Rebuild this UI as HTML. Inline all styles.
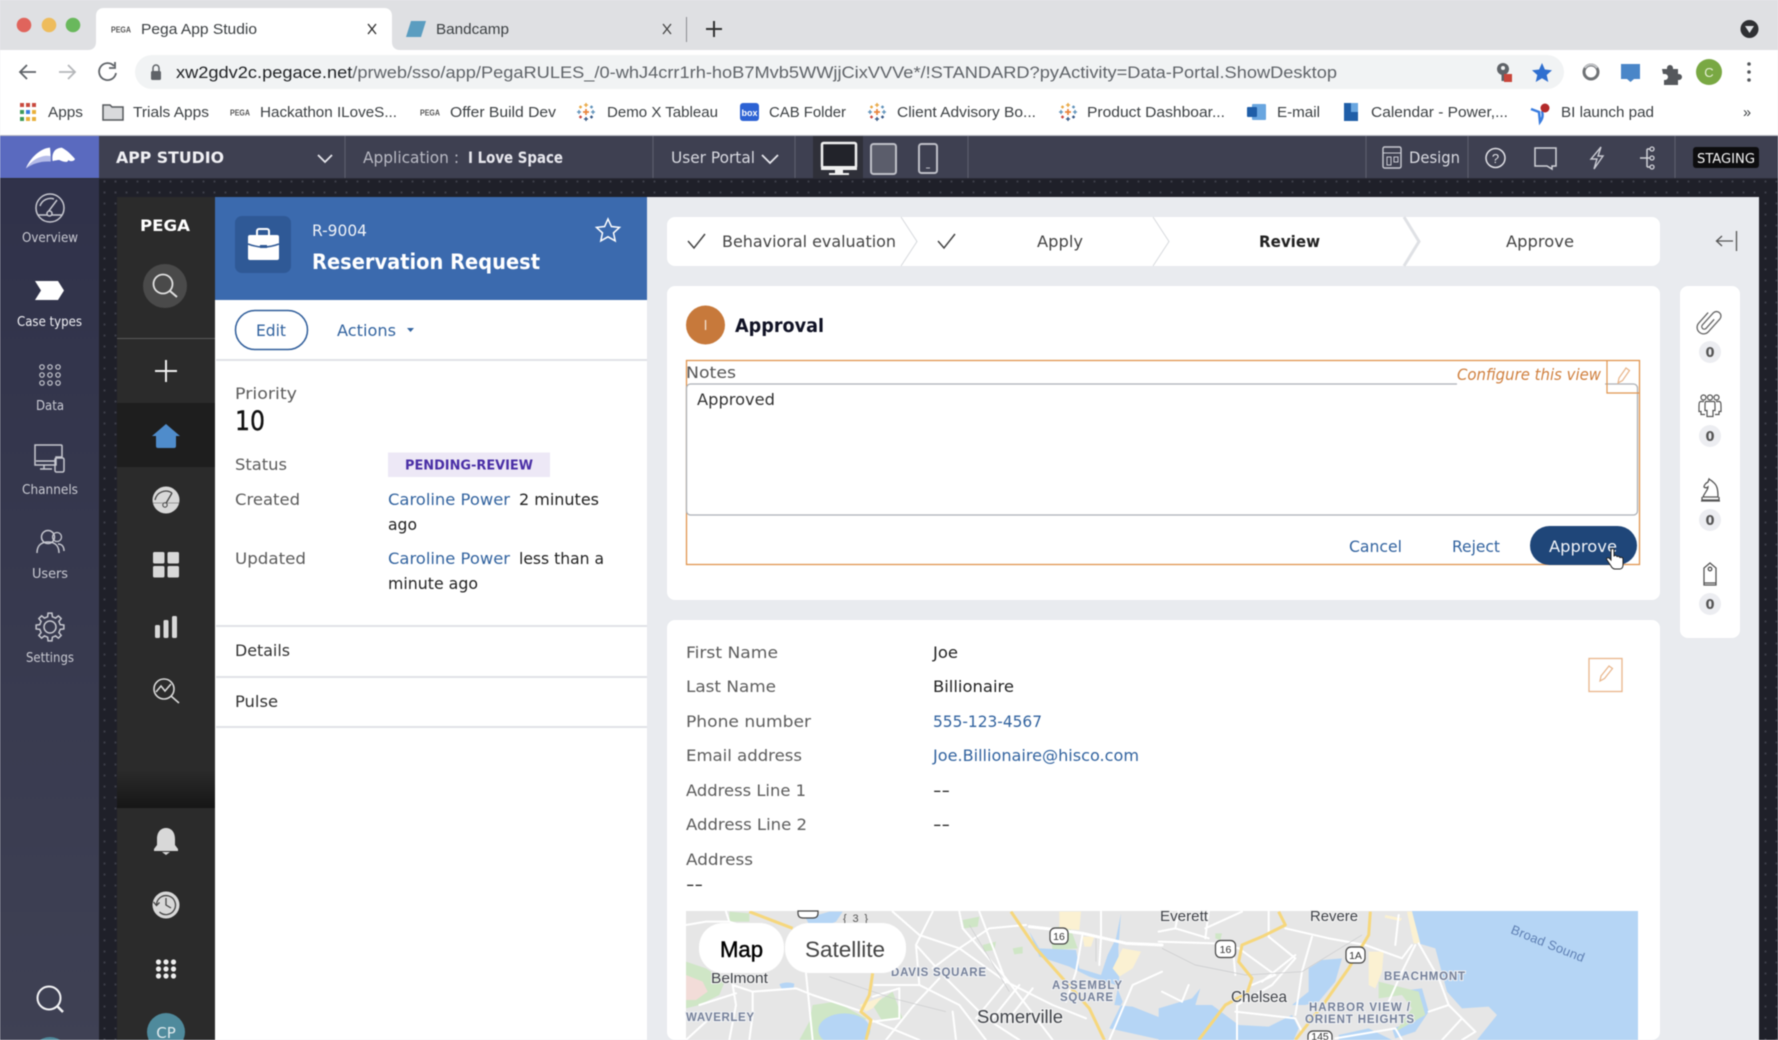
<!DOCTYPE html>
<html><head><meta charset="utf-8"><title>Pega App Studio</title>
<style>
html,body{margin:0;padding:0;width:1778px;height:1040px;overflow:hidden;background:#e9ebef}
svg{display:block}
svg.root{filter:blur(.45px)}
text{font-family:"Liberation Sans",sans-serif;white-space:pre}
.o text,text.o{font-family:"DejaVu Sans","Liberation Sans",sans-serif}
.lab{fill:#5c5c5c;font-size:16px}.val{fill:#222;font-size:16px}.lnk{fill:#32639f;font-size:16px}
.ch{fill:#3c4043;font-size:14.5px}
.rl{fill:#c9cad2;font-size:13.5px}
.hd{fill:#d8d9e0;font-size:16px}
.ml{fill:#76819a;font-size:11.5px;font-weight:700;paint-order:stroke;stroke:#eef0f3;stroke-width:2px}
.mc{fill:#3f4248;font-size:15px;paint-order:stroke;stroke:#f2f2f2;stroke-width:2px}
</style></head><body>
<svg class="root" xmlns="http://www.w3.org/2000/svg" width="1778" height="1040" viewBox="0 0 1778 1040">
<defs>
<linearGradient id="rail" x1="0" y1="0" x2="0" y2="1"><stop offset="0" stop-color="#30324a"/><stop offset="1" stop-color="#3f4154"/></linearGradient>
<linearGradient id="fade" x1="0" y1="0" x2="0" y2="1"><stop offset="0" stop-color="#2b2b2b"/><stop offset="1" stop-color="#161616"/></linearGradient>
<pattern id="dots" width="11" height="11" patternUnits="userSpaceOnUse"><circle cx="5.5" cy="5.5" r="1.1" fill="#3d3e49"/></pattern>
<g id="tb" fill="none" stroke-width="1.300">
<path d="M-3 0h6M0-3v6" stroke="#e8833a" stroke-width="1.700"/>
<path d="M-2 -7h4M0-9v4" stroke="#e8a33a"/>
<path d="M-2 7h4M0 5v4" stroke="#2f4f7f"/>
<path d="M-9 0h4M-7-2v4" stroke="#5b8fb8"/>
<path d="M5 0h4M7-2v4" stroke="#5b8fb8"/>
<path d="M-7-5h3M-5.500-6.500v3" stroke="#e8a33a"/>
<path d="M4-5h3M5.500-6.500v3" stroke="#5b8fb8"/>
<path d="M-7 5h3M-5.500 3.500v3" stroke="#c8403a"/>
<path d="M4 5h3M5.500 3.500v3" stroke="#2f4f7f"/>
</g>
<g id="pg"><text x="0" y="3.5" font-size="8" font-weight="700" fill="#555" textLength="20" lengthAdjust="spacingAndGlyphs">PEGA</text></g>
</defs>

<!-- browser chrome -->
<rect width="1778" height="50" fill="#dfe0e3"/>
<rect y="50" width="1778" height="85" fill="#fff"/>
<path d="M88 50c5 0 8-3 8-8V16c0-5 3-8 8-8h280c5 0 8 3 8 8v26c0 5 3 8 8 8z" fill="#fff"/>
<circle cx="24" cy="25" r="7.3" fill="#e0645c"/><circle cx="49" cy="25" r="7.3" fill="#eebc5c"/><circle cx="73" cy="25" r="7.3" fill="#69b85c"/>
<use href="#pg" x="111" y="29"/>
<text class="ch" x="141" y="34" textLength="116" lengthAdjust="spacingAndGlyphs">Pega App Studio</text>
<path d="M368 24l8 10M376 24l-8 10" stroke="#333" stroke-width="1.400"/>
<path d="M411 21h15l-5 16h-15z" fill="#5b9dc0"/>
<text class="ch" x="436" y="34" textLength="73" lengthAdjust="spacingAndGlyphs">Bandcamp</text>
<path d="M663 24l8 10M671 24l-8 10" stroke="#444" stroke-width="1.300"/>
<rect x="686" y="17" width="1" height="25" fill="#8a8c90"/>
<path d="M714 21v16M706 29h16" stroke="#333" stroke-width="2"/>
<circle cx="1749.5" cy="29" r="9" fill="#2f3033"/><path d="M1745 26h9l-4.500 7z" fill="#dfe1e5"/>

<path d="M36 72H20M27 65l-7 7 7 7" fill="none" stroke="#5f6368" stroke-width="1.8"/>
<path d="M59 72h16M68 65l7 7-7 7" fill="none" stroke="#b5b7ba" stroke-width="1.8"/>
<path d="M114 66a8.500 8.500 0 1 0 2 7M115 62v6h-6" fill="none" stroke="#5f6368" stroke-width="1.800"/>
<rect x="135" y="55" width="1429" height="34" rx="17" fill="#f1f3f4"/>
<rect x="151" y="71" width="10" height="9" rx="1.500" fill="#5f6368"/><path d="M153 71v-3a3 3 0 0 1 6 0v3" fill="none" stroke="#5f6368" stroke-width="1.500"/>
<text x="176" y="78" font-size="16.500" textLength="1161" lengthAdjust="spacingAndGlyphs" fill="#5f6368"><tspan fill="#1f2124">xw2gdv2c.pegace.net</tspan>/prweb/sso/app/PegaRULES_/0-whJ4crr1rh-hoB7Mvb5WWjjCixVVVe*/!STANDARD?pyActivity=Data-Portal.ShowDesktop</text>
<circle cx="1503" cy="69" r="6" fill="#5f6368"/><circle cx="1503" cy="68" r="2" fill="#f1f3f4"/><path d="M1503 74v7" stroke="#5f6368" stroke-width="3"/><rect x="1504" y="74" width="8" height="8" fill="#c9453a"/>
<path d="M1542 63l2.900 6.500 7.100.7-5.300 4.800 1.600 7-6.300-3.700-6.300 3.700 1.600-7-5.300-4.800 7.100-.7z" fill="#2f6fd0"/>
<circle cx="1591" cy="72" r="7" fill="#fff" stroke="#6f7275" stroke-width="3"/><path d="M1585 68a7 7 0 0 1 12 0" stroke="#c3c5c8" stroke-width="2" fill="none"/>
<path d="M1621 64h19v15h-6l-3.500 3-3.500-3h-6z" fill="#4a86c8"/>
<path d="M1662 69h5v-1a3 3 0 0 1 6 0v1h5v5h1a3 3 0 0 1 0 6h-1v5h-14v-5h1a3 3 0 0 0 0-6h-2z" fill="#55585c"/>
<circle cx="1709" cy="72" r="13" fill="#79a843"/><text x="1709" y="77" font-size="13" fill="#e8f0d8" text-anchor="middle">C</text>
<circle cx="1749" cy="64" r="1.800" fill="#55585c"/><circle cx="1749" cy="72" r="1.800" fill="#55585c"/><circle cx="1749" cy="80" r="1.800" fill="#55585c"/>

<!-- bookmarks -->
<g>
<rect x="20" y="103" width="4" height="4" fill="#c94a3f"/><rect x="26" y="103" width="4" height="4" fill="#c94a3f"/><rect x="32" y="103" width="4" height="4" fill="#c94a3f"/>
<rect x="20" y="110" width="4" height="4" fill="#3f9a5a"/><rect x="26" y="110" width="4" height="4" fill="#3a7de0"/><rect x="32" y="110" width="4" height="4" fill="#e8b03a"/>
<rect x="20" y="117" width="4" height="4" fill="#3f9a5a"/><rect x="26" y="117" width="4" height="4" fill="#e8b03a"/><rect x="32" y="117" width="4" height="4" fill="#e8b03a"/>
<text class="ch" x="48" y="117" textLength="35" lengthAdjust="spacingAndGlyphs">Apps</text>
<path d="M103 105h7l2 2h11v13h-20z" fill="#d9dadc" stroke="#55585c" stroke-width="1.500"/>
<text class="ch" x="133" y="117" textLength="76" lengthAdjust="spacingAndGlyphs">Trials Apps</text>
<use href="#pg" x="230" y="112"/><text class="ch" x="260" y="117" textLength="137" lengthAdjust="spacingAndGlyphs">Hackathon ILoveS...</text>
<use href="#pg" x="420" y="112"/><text class="ch" x="450" y="117" textLength="106" lengthAdjust="spacingAndGlyphs">Offer Build Dev</text>
<use href="#tb" x="586" y="112"/><text class="ch" x="607" y="117" textLength="111" lengthAdjust="spacingAndGlyphs">Demo X Tableau</text>
<rect x="740" y="103" width="19" height="18" rx="3" fill="#2c62d4"/><text x="749.500" y="116" font-size="9" fill="#fff" text-anchor="middle" font-weight="700">box</text>
<text class="ch" x="769" y="117" textLength="77" lengthAdjust="spacingAndGlyphs">CAB Folder</text>
<use href="#tb" x="877" y="112"/><text class="ch" x="897" y="117" textLength="139" lengthAdjust="spacingAndGlyphs">Client Advisory Bo...</text>
<use href="#tb" x="1068" y="112"/><text class="ch" x="1087" y="117" textLength="138" lengthAdjust="spacingAndGlyphs">Product Dashboar...</text>
<rect x="1252" y="104" width="14" height="16" rx="1" fill="#69a6e0"/><rect x="1247" y="107" width="10" height="10" rx="1" fill="#1f5ea8"/>
<text class="ch" x="1277" y="117" textLength="43" lengthAdjust="spacingAndGlyphs">E-mail</text>
<rect x="1344" y="103" width="14" height="18" fill="#1f5ea8"/><rect x="1351" y="103" width="7" height="9" fill="#69a6e0"/>
<text class="ch" x="1371" y="117" textLength="137" lengthAdjust="spacingAndGlyphs">Calendar - Power,...</text>
<path d="M1531 109l8 3 1 10c3-4 3-7 2-11" fill="none" stroke="#3a7de0" stroke-width="2.500"/><circle cx="1545" cy="108" r="4.500" fill="#b32a2a"/>
<text class="ch" x="1561" y="117" textLength="93" lengthAdjust="spacingAndGlyphs">BI launch pad</text>
<text class="ch" x="1743" y="117" font-size="15">»</text>
</g>

<!-- top header -->
<rect y="135" width="1778" height="1" fill="#b9bbc4"/>
<rect y="136" width="1778" height="43" fill="#3e4051"/>
<rect y="136" width="99" height="43" fill="#5a6abf"/>
<g transform="translate(0 95) scale(.3333)">
<path d="M78 220C90 190 120 160 150 158 152 175 152 190 152 198 125 190 100 200 78 220z" fill="#fff"/>
<path d="M78 220C100 205 125 198 152 200L151 183C125 178 95 195 78 220z" fill="#b4bbe8"/>
<path d="M158 198C155 180 160 160 185 158 200 165 215 180 225 192 222 200 210 200 205 195 203 205 190 200 178 195 170 195 160 198 158 198z" fill="#fff"/>
</g>
<path d="M345 136v43M653 136v43M795 136v43M968 136v43M1366 136v43M1468 136v43M1675 136v43" stroke="#5f6170" stroke-width="1"/>
<g class="o">
<text x="116" y="163" font-size="16" font-weight="700" fill="#f0f0f4" textLength="108" lengthAdjust="spacingAndGlyphs">APP STUDIO</text>
<text class="hd" x="363" y="163" style="fill:#b9bac4" textLength="96" lengthAdjust="spacingAndGlyphs">Application :</text>
<text x="468" y="163" font-size="16" font-weight="700" fill="#e8e8ee" textLength="95" lengthAdjust="spacingAndGlyphs">I Love Space</text>
<text class="hd" x="671" y="163" textLength="84" lengthAdjust="spacingAndGlyphs">User Portal</text>
<text class="hd" x="1409" y="163" textLength="51" lengthAdjust="spacingAndGlyphs">Design</text>
</g>
<path d="M318 155l7 7 7-7M762 155l8 8 8-8" fill="none" stroke="#e6e6ec" stroke-width="1.800"/>
<rect x="813" y="136" width="50" height="43" fill="#2f3039"/>
<rect x="822" y="143" width="34" height="25" rx="1.500" fill="#22232a" stroke="#f0f0f0" stroke-width="2.500"/><path d="M821 166h36v4h-36zM835 170h8v3h-8zM829 173h20v2h-20z" fill="#f0f0f0"/>
<rect x="871" y="144" width="25" height="30" rx="2.500" fill="#5b5d6b" stroke="#bfc0c8" stroke-width="2"/>
<rect x="919" y="144" width="18" height="29" rx="2.500" fill="none" stroke="#bfc0c8" stroke-width="2"/><path d="M926 168h4" stroke="#bfc0c8"/>
<rect x="1383" y="147" width="18" height="21" rx="1.500" fill="none" stroke="#c9cad2" stroke-width="1.400"/><path d="M1383 153h18M1387 157h4v8h-4zM1394 157h4v5h-4z" fill="none" stroke="#c9cad2"/>
<circle cx="1495.500" cy="158" r="9.500" fill="none" stroke="#e0e0e6" stroke-width="1.500"/><text x="1495.500" y="163" font-size="13" fill="#e0e0e6" text-anchor="middle">?</text>
<path d="M1535 148h21v18h-4v3l-5-3h-12z" fill="none" stroke="#d0d1d8" stroke-width="1.500"/>
<path d="M1601 147l-10 12h6l-3 10 9-13h-5l3-9z" fill="none" stroke="#c9cad2" stroke-width="1.400"/>
<path d="M1640 158h7M1647 149v18M1647 149h3M1647 158h3M1647 167h3" fill="none" stroke="#d0d1d8" stroke-width="1.500"/><circle cx="1652" cy="149" r="2" fill="none" stroke="#d0d1d8" stroke-width="1.300"/><circle cx="1652" cy="158" r="2" fill="none" stroke="#d0d1d8" stroke-width="1.300"/><circle cx="1652" cy="167" r="2" fill="none" stroke="#d0d1d8" stroke-width="1.300"/>
<rect x="1693" y="147" width="66" height="21" rx="3" fill="#0d0d0f"/><text class="o" x="1697" y="163" font-size="13.500" fill="#f4f4f4" textLength="58" lengthAdjust="spacingAndGlyphs">STAGING</text>
<rect y="178" width="1778" height="1" fill="#2a2b36"/>

<!-- left rail -->
<rect y="179" width="99" height="861" fill="url(#rail)"/>
<rect x="99" y="179" width="1679" height="18" fill="#1f2029"/><rect x="99" y="179" width="18" height="861" fill="#1f2029"/>
<rect x="99" y="179" width="1679" height="18" fill="url(#dots)"/><rect x="99" y="179" width="18" height="861" fill="url(#dots)"/>
<rect x="1759" y="179" width="19" height="861" fill="#1f2029"/><rect x="1759" y="179" width="19" height="861" fill="url(#dots)"/>

<g fill="none" stroke="#c6c7cf" stroke-width="1.500">
<circle cx="50" cy="208" r="14"/><path d="M40 206a11 11 0 0 1 14-7M38 215h24"/><path d="M48 212l9-12"/><circle cx="49.500" cy="213.500" r="2.500" fill="#30324a"/>
<path d="M35 445h26a1 1 0 0 1 1 1v11h-6v8H35zM36 461h20M44 465v4M40 469h12" />
<rect x="55" y="458" width="9" height="14" rx="1.500"/>
<circle cx="48" cy="537" r="6.500"/><path d="M37 553c0-8 5-11 11-11s11 3 11 11"/><circle cx="57" cy="537" r="4.500" stroke-width="1.300"/><path d="M58 544c4 0 6 3 6 7"/>
<path transform="translate(50 627)" d="M10.230-2.360L13.860-1.950 13.860 1.950 10.230 2.360 8.900 5.570 11.180 8.420 8.420 11.180 5.570 8.900 2.360 10.230 1.950 13.860-1.950 13.860-2.360 10.230-5.570 8.900-8.420 11.180-11.180 8.420-8.900 5.570-10.230 2.360-13.860 1.950-13.860-1.950-10.230-2.360-8.900-5.570-11.180-8.420-8.420-11.180-5.570-8.900-2.360-10.230-1.950-13.860 1.950-13.860 2.360-10.230 5.570-8.900 8.420-11.180 11.180-8.420 8.900-5.570z"/>
<circle cx="50" cy="627" r="6"/>
<g stroke-width="1.200"><circle cx="42" cy="367" r="2.200"/><circle cx="50" cy="367" r="2.200"/><circle cx="58" cy="367" r="2.200"/><circle cx="42" cy="375" r="2.200"/><circle cx="50" cy="375" r="2.200"/><circle cx="58" cy="375" r="2.200"/><circle cx="42" cy="383" r="2.200"/><circle cx="50" cy="383" r="2.200"/><circle cx="58" cy="383" r="2.200"/></g>
<circle cx="49" cy="998" r="11.500" stroke="#f2f2f4" stroke-width="2"/><path d="M57 1006l6 6" stroke="#f2f2f4" stroke-width="2.500"/>
</g>
<path d="M35 281h23l6 9.500-6 9.500H35l6-9.500z" fill="#fff"/>
<circle cx="50" cy="1056" r="19" fill="#4f8a9c"/>
<g class="o">
<text class="rl" x="22" y="242" textLength="56" lengthAdjust="spacingAndGlyphs">Overview</text>
<text class="rl" x="17" y="326" style="fill:#f0f0f4" textLength="65" lengthAdjust="spacingAndGlyphs">Case types</text>
<text class="rl" x="36" y="410" textLength="28" lengthAdjust="spacingAndGlyphs">Data</text>
<text class="rl" x="22" y="494" textLength="56" lengthAdjust="spacingAndGlyphs">Channels</text>
<text class="rl" x="32" y="578" textLength="36" lengthAdjust="spacingAndGlyphs">Users</text>
<text class="rl" x="26" y="662" textLength="48" lengthAdjust="spacingAndGlyphs">Settings</text>
</g>

<!-- dark case nav -->
<rect x="117" y="197" width="98" height="843" fill="#2b2b2b"/>
<rect x="117" y="770" width="98" height="38" fill="url(#fade)"/>
<rect x="117" y="403" width="98" height="64" fill="#1e1e1e"/>
<rect x="117" y="338" width="98" height="1" fill="#5a5a5a"/>
<text class="o" x="140" y="231" font-size="16" font-weight="700" fill="#fff" textLength="50" lengthAdjust="spacingAndGlyphs">PEGA</text>
<circle cx="165" cy="286" r="22" fill="#4a4a4a"/>
<circle cx="163" cy="284" r="9.500" fill="none" stroke="#e0e0e0" stroke-width="1.800"/><path d="M170 291l7 6" stroke="#e0e0e0" stroke-width="2"/>
<path d="M166 360v22M155 371h22" stroke="#eee" stroke-width="2"/>
<path d="M166 424l-14 12h4v10q0 2 2 2h16q2 0 2-2v-10h4z" fill="#4f8ccb"/>
<circle cx="166" cy="500" r="13.500" fill="#d8d8d8"/><path d="M155 500a11 11 0 0 1 17-7" fill="none" stroke="#444" stroke-width="1.300"/><path d="M153 503h26" stroke="#999"/><path d="M165 505l7-12" stroke="#444" stroke-width="1.300"/><circle cx="165" cy="505" r="2.200" fill="#d8d8d8" stroke="#444"/>
<g fill="#d8d8d8"><rect x="153" y="552" width="11.500" height="11.500" rx="1.500"/><rect x="167.500" y="552" width="11.500" height="11.500" rx="1.500"/><rect x="153" y="566" width="11.500" height="11.500" rx="1.500"/><rect x="167.500" y="566" width="11.500" height="11.500" rx="1.500"/>
<rect x="155" y="625" width="5" height="13" rx="1.500"/><rect x="163.500" y="620" width="5" height="18" rx="1.500"/><rect x="172" y="616" width="5" height="22" rx="1.500"/></g>
<g fill="none" stroke="#d8d8d8" stroke-width="1.600"><circle cx="164" cy="689" r="10"/><path d="M171 696l8 7"/><path d="M156 692l5-6 4 5 6-7"/></g>
<path d="M166 828c-6 0-9 5-9 11v6l-3 4v2h24v-2l-3-4v-6c0-6-3-11-9-11z" fill="#d8d8d8"/><path d="M162 852h8l-4 3z" fill="#d8d8d8"/>
<circle cx="166" cy="905" r="13.500" fill="#d8d8d8"/><path d="M156.500 905a9.500 9.500 0 1 1 3 7M153.500 902l3 3.500 3-3M166 898v7l5 3" fill="none" stroke="#444" stroke-width="1.300"/>
<g fill="#eee"><circle cx="158.500" cy="962" r="2.600"/><circle cx="166" cy="962" r="2.600"/><circle cx="173.500" cy="962" r="2.600"/><circle cx="158.500" cy="969" r="2.600"/><circle cx="166" cy="969" r="2.600"/><circle cx="173.500" cy="969" r="2.600"/><circle cx="158.500" cy="976" r="2.600"/><circle cx="166" cy="976" r="2.600"/><circle cx="173.500" cy="976" r="2.600"/></g>
<circle cx="166" cy="1032" r="19" fill="#4f8a9c"/><text class="o" x="166" y="1038" font-size="15" fill="#dfe9ec" text-anchor="middle">CP</text>

<!-- case summary panel -->
<rect x="215" y="197" width="432" height="843" fill="#fff"/>
<rect x="215" y="197" width="432" height="103" fill="#3b6aae"/>
<rect x="235" y="216" width="56" height="57" rx="7" fill="#2f5996"/>
<rect x="248" y="235" width="31" height="25" rx="2" fill="#fff"/><path d="M257 235v-4a2 2 0 0 1 2-2h8a2 2 0 0 1 2 2v4" fill="none" stroke="#fff" stroke-width="2"/><path d="M248 244q15 6 31 0" fill="none" stroke="#2f5996" stroke-width="1.500"/><rect x="260" y="245" width="7" height="3" fill="#2f5996"/>
<path d="M608 219l3.400 7.500 8.100.9-6 5.500 1.700 8-7.200-4.100-7.200 4.100 1.700-8-6-5.500 8.100-.9z" fill="none" stroke="#fff" stroke-width="1.500"/>
<rect x="235.500" y="310.500" width="72" height="39" rx="19.500" fill="#fff" stroke="#2f5d9a" stroke-width="1.500"/>
<path d="M407 328h7l-3.500 4z" fill="#32639f"/>
<rect x="216" y="359" width="431" height="2" fill="#e1e3e7"/><rect x="216" y="625" width="431" height="2" fill="#e1e3e7"/><rect x="216" y="676" width="431" height="2" fill="#e1e3e7"/><rect x="216" y="726" width="431" height="2" fill="#e1e3e7"/>
<rect x="388" y="452.500" width="162" height="24.500" fill="#ede8f6"/>
<g class="o">
<text x="312" y="236" font-size="16" fill="#f0f3f8" textLength="55" lengthAdjust="spacingAndGlyphs">R-9004</text>
<text x="312" y="269" font-size="21" font-weight="700" fill="#fff" textLength="228" lengthAdjust="spacingAndGlyphs">Reservation Request</text>
<text class="lnk" x="256" y="336" textLength="30" lengthAdjust="spacingAndGlyphs">Edit</text>
<text class="lnk" x="337" y="336" textLength="59" lengthAdjust="spacingAndGlyphs">Actions</text>
<text class="lab" x="235" y="399" textLength="62" lengthAdjust="spacingAndGlyphs">Priority</text>
<text x="235" y="430" font-size="27" fill="#111" stroke="#111" stroke-width=".4" textLength="30" lengthAdjust="spacingAndGlyphs">10</text>
<text class="lab" x="235" y="470" textLength="52" lengthAdjust="spacingAndGlyphs">Status</text>
<text x="405" y="469.500" font-size="13.500" font-weight="700" fill="#4a2fa6" textLength="128" lengthAdjust="spacingAndGlyphs">PENDING-REVIEW</text>
<text class="lab" x="235" y="505" textLength="65" lengthAdjust="spacingAndGlyphs">Created</text>
<text class="lnk" x="388" y="505" textLength="122" lengthAdjust="spacingAndGlyphs">Caroline Power</text>
<text class="val" x="519" y="505" textLength="80" lengthAdjust="spacingAndGlyphs">2 minutes</text>
<text class="val" x="388" y="530" textLength="29" lengthAdjust="spacingAndGlyphs">ago</text>
<text class="lab" x="235" y="564" textLength="71" lengthAdjust="spacingAndGlyphs">Updated</text>
<text class="lnk" x="388" y="564" textLength="122" lengthAdjust="spacingAndGlyphs">Caroline Power</text>
<text class="val" x="519" y="564" textLength="85" lengthAdjust="spacingAndGlyphs">less than a</text>
<text class="val" x="388" y="589" textLength="90" lengthAdjust="spacingAndGlyphs">minute ago</text>
<text class="lab" x="235" y="656" style="fill:#333" textLength="55" lengthAdjust="spacingAndGlyphs">Details</text>
<text class="lab" x="235" y="707" style="fill:#333" textLength="43" lengthAdjust="spacingAndGlyphs">Pulse</text>
</g>

<!-- stages -->
<rect x="667" y="217" width="993" height="49" rx="8" fill="#fff"/>
<path d="M901 217l16 24.500-16 24.500M1153 217l16 24.500-16 24.500" fill="none" stroke="#d7d9dd" stroke-width="1"/>
<path d="M1404 217l15 24.500-15 24.500" fill="none" stroke="#dfe1e5" stroke-width="3"/>
<path d="M688 241l6 7 11-14M938 241l6 7 11-14" fill="none" stroke="#444" stroke-width="1.500"/>
<g class="o">
<text class="lab" x="722" y="247" style="fill:#444" textLength="174" lengthAdjust="spacingAndGlyphs">Behavioral evaluation</text>
<text class="lab" x="1037" y="247" style="fill:#444" textLength="46" lengthAdjust="spacingAndGlyphs">Apply</text>
<text x="1259" y="247" font-size="16" font-weight="700" fill="#222" textLength="61" lengthAdjust="spacingAndGlyphs">Review</text>
<text class="lab" x="1506" y="247" style="fill:#444" textLength="68" lengthAdjust="spacingAndGlyphs">Approve</text>
</g>
<path d="M1736.500 231v20M1716 241h17M1722 236l-5.500 5 5.500 5" fill="none" stroke="#555" stroke-width="1.300"/>

<!-- approval card -->
<rect x="667" y="286" width="993" height="314" rx="8" fill="#fff"/>
<circle cx="705.500" cy="325" r="19.500" fill="#c7793b"/><text class="o" x="705.500" y="330" font-size="13" fill="#f4e2d0" text-anchor="middle">I</text>
<text class="o" x="735" y="332" font-size="19" font-weight="700" fill="#101225" textLength="89" lengthAdjust="spacingAndGlyphs">Approval</text>
<rect x="686.500" y="360.500" width="953" height="204" fill="none" stroke="#e0954f" stroke-width="1.300"/>
<text class="o lab" x="686" y="378" style="fill:#555" textLength="50" lengthAdjust="spacingAndGlyphs">Notes</text>
<rect x="686.500" y="384" width="951" height="131" rx="4" fill="#fff" stroke="#adb1b6" stroke-width="1.300"/>
<rect x="1457" y="378" width="148" height="12" fill="#fff"/>
<text class="o" x="1457" y="380" font-size="16" font-style="italic" fill="#d0803f" textLength="144" lengthAdjust="spacingAndGlyphs">Configure this view</text>
<path d="M1607 360v33h33" fill="none" stroke="#e0954f" stroke-width="1.200"/>
<path d="M1618 383l1-5 7-10 3.500 2.500-7 10z" fill="none" stroke="#e9b58a" stroke-width="1.200"/>
<text class="o val" x="697" y="405" style="fill:#333" textLength="78" lengthAdjust="spacingAndGlyphs">Approved</text>
<g class="o"><text class="lnk" x="1349" y="552" textLength="53" lengthAdjust="spacingAndGlyphs">Cancel</text><text class="lnk" x="1452" y="552" textLength="48" lengthAdjust="spacingAndGlyphs">Reject</text></g>
<rect x="1530" y="526" width="107" height="39" rx="19.500" fill="#1f4679"/>
<text class="o" x="1549" y="552" font-size="16" fill="#f2f4f8" textLength="68" lengthAdjust="spacingAndGlyphs">Approve</text>
<path d="M1611 550v10l-2-2c-2-1-3 1-2 2l4 6c1 2 2 3 4 3h5c2 0 3-2 3-4v-6c0-2-3-2-3-1 0-2-3-2-3-1 0-2-3-2-3-.5V550c0-2-3-2-3 0z" fill="#fff" stroke="#222" stroke-width="1"/>

<!-- right utility card -->
<rect x="1680" y="286" width="60" height="352" rx="8" fill="#fff"/>
<g fill="none" stroke="#666" stroke-width="1.300">
<path transform="rotate(42 1710 321)" d="M1712 317v12a2.500 2.500 0 0 1-5 0V313a4.500 4.500 0 0 1 9 0v17a6.500 6.500 0 0 1-13 0V316"/>
</g>
<g fill="none" stroke="#555" stroke-width="1.200">
<circle cx="1703.500" cy="397.500" r="2.500"/><circle cx="1710" cy="397.500" r="2.500"/><circle cx="1716.500" cy="397.500" r="2.500"/>
<path d="M1704 401.500h-3c-2 0-2 2-2 6v4h2v3h4M1716 401.500h3c2 0 2 2 2 6v4h-2v3h-4M1706 401.500h8c1 0 1 2 1 6v3h-2v6h-6v-6h-2v-3c0-4 0-6 1-6z"/>
</g>
<g fill="none" stroke="#555" stroke-width="1.300" transform="translate(0 -2)">
<path d="M1703 499h15c0-8-1-12-5-15-2-2-3-2-4-3l-1 3c-2 1-4 3-4 5 1 1 3 1 4 0 0 3-3 5-5 10zM1702 499v3h17v-3M1701 503h19"/>
</g>
<g fill="none" stroke="#555" stroke-width="1.300">
<path d="M1710 563l6 5v15h-12v-15zM1704 583v2h12v-2"/><circle cx="1710" cy="569" r="1.800"/>
</g>
<g fill="#ecedf1"><circle cx="1710" cy="352" r="11"/><circle cx="1710" cy="436" r="11"/><circle cx="1710" cy="520" r="11"/><circle cx="1710" cy="604" r="11"/></g>
<g font-size="13" font-weight="700" fill="#555" text-anchor="middle"><text class="o" x="1710" y="357">0</text><text class="o" x="1710" y="441">0</text><text class="o" x="1710" y="525">0</text><text class="o" x="1710" y="609">0</text></g>

<!-- customer card -->
<rect x="667" y="620" width="993" height="420" rx="8" fill="#fff"/>
<g class="o">
<text class="lab" x="686" y="658" textLength="92" lengthAdjust="spacingAndGlyphs">First Name</text><text class="val" x="933" y="658" textLength="25" lengthAdjust="spacingAndGlyphs">Joe</text>
<text class="lab" x="686" y="692" textLength="90" lengthAdjust="spacingAndGlyphs">Last Name</text><text class="val" x="933" y="692" textLength="81" lengthAdjust="spacingAndGlyphs">Billionaire</text>
<text class="lab" x="686" y="727" textLength="125" lengthAdjust="spacingAndGlyphs">Phone number</text><text class="lnk" x="933" y="727" textLength="109" lengthAdjust="spacingAndGlyphs">555-123-4567</text>
<text class="lab" x="686" y="761" textLength="116" lengthAdjust="spacingAndGlyphs">Email address</text><text class="lnk" x="933" y="761" textLength="206" lengthAdjust="spacingAndGlyphs">Joe.Billionaire@hisco.com</text>
<text class="lab" x="686" y="796" textLength="120" lengthAdjust="spacingAndGlyphs">Address Line 1</text><text class="val" x="933" y="796" textLength="17" lengthAdjust="spacingAndGlyphs">--</text>
<text class="lab" x="686" y="830" textLength="121" lengthAdjust="spacingAndGlyphs">Address Line 2</text><text class="val" x="933" y="830" textLength="17" lengthAdjust="spacingAndGlyphs">--</text>
<text class="lab" x="686" y="865" textLength="67" lengthAdjust="spacingAndGlyphs">Address</text><text class="val" x="686" y="890" textLength="17" lengthAdjust="spacingAndGlyphs">--</text>
</g>
<rect x="1589" y="658.500" width="33" height="33" fill="#fff" stroke="#e9b58a" stroke-width="1.300"/>
<path d="M1600 681l1-5 8-10 3.500 2.500-8 10z" fill="none" stroke="#e9b58a" stroke-width="1.200"/>

<!-- map -->
<svg x="686" y="911" width="952" height="129" viewBox="686 911 952 129">
<rect x="686" y="911" width="952" height="129" fill="#e6e6e6"/>
<!-- west half (zoom coords) -->
<g transform="translate(686 905) scale(.33333)">
<path d="M0 170L60 190 75 200 120 220 100 270 40 300 0 310zM130 20L190 25 190 50 130 50zM830 45L880 35 875 65 835 70zM890 120L930 110 925 135 895 140zM980 130L1010 125 1010 145 985 148zM380 300L450 290 540 340 520 405H340L370 350zM560 300L620 260 650 340 590 350zM1090 70L1150 60 1175 130 1100 135z" fill="#cfe6c6"/>
<path d="M0 210L50 230 65 260 30 285 0 285z" fill="#f2dcd8"/>
<path d="M280 238Q300 228 325 236L322 252 290 256zM360 40L430 20H470L450 50 400 70 370 60z" fill="#b5d5f5"/>
<ellipse cx="475" cy="375" rx="78" ry="50" fill="#b5d5f5"/>
<path d="M1030 80L1060 130 1170 135 1180 190 1245 210 1265 150 1290 100 1305 25 1297 130 1300 230 1285 300 1340 305 1428 340V405L1270 370 1310 290 1290 240 1210 215 1150 185 1060 155z" fill="#b5d5f5"/>
<path d="M1120 20H1185L1180 75 1120 70zM1190 95L1225 95 1215 125 1195 125zM1280 190L1310 130 1365 140 1340 190 1300 215zM520 300L590 275 560 310 540 320z" fill="#fbf1d2"/>
<g fill="none" stroke="#fff" stroke-width="6" stroke-linecap="round" stroke-linejoin="round">
<path d="M0 60L60 50 130 50 210 75M120 20L130 50M140 240L200 260 330 250 380 270 530 320M200 260L200 330 190 405M140 240L150 300 130 405M40 300L150 265M0 405L60 350M360 205L380 405M565 240L700 240 820 300 900 405M560 275L640 250M640 250V340M640 340L560 350M555 345L700 405M620 20L700 90 820 130 960 230 1100 300 1200 340M820 20L830 70 960 220 1100 405M740 20L690 120 700 240M690 120L780 220 900 340 1000 405M1020 60L910 70 820 130 740 190M880 20L960 230M760 220L680 305 600 405M960 230L870 340M1000 240L920 340M1040 250L970 340M800 320L810 405M1190 85L1170 200 1140 290M1428 200L1340 240 1285 370 1270 405M1245 20V100L1240 180"/>
<path d="M1030 65L1120 75 1190 85 1320 115 1428 120" stroke-width="9"/>
</g>
<path d="M430 215L620 280 780 320M850 60L970 260M1230 100V170" fill="none" stroke="#c9cacc" stroke-width="2"/>
<g fill="none" stroke="#f6d77c" stroke-width="9" stroke-linejoin="round">
<path d="M190 20L320 70M975 20L1050 130 1130 220 1210 310 1255 405M560 205L550 270 525 320 555 345 540 405"/>
</g>
</g>
<!-- east half (zoom coords) -->
<g transform="translate(1162 905) scale(.33333)">
<path d="M-10 310L90 280 115 250 100 300 150 300 230 360 320 365 390 330 410 370 395 405H-10zM440 190L480 165 540 160 520 230 470 290 430 300 390 300 440 260zM530 390L620 370 690 405H530zM700 260L780 250 800 320 760 380 700 400 690 370 760 350 780 300z" fill="#b5d5f5"/>
<path d="M650 230L770 260 790 330 700 380 750 310 720 270 650 280zM160 85L180 85 175 105 160 100z" fill="#cfe6c6"/>
<path d="M750 18H1428V405H945L1005 330 980 305 900 310 855 260 820 130 770 115z" fill="#b5d5f5"/>
<path d="M735 20L750 20 775 115 755 115zM620 140L665 140 660 200 640 250 620 240zM670 30L720 40 715 48 668 38z" fill="#fbf1d2"/>
<g fill="none" stroke="#fff" stroke-width="6" stroke-linecap="round" stroke-linejoin="round">
<path d="M-10 110L160 115 230 130M-10 80L40 70 140 100M40 70L50 20M140 20L130 100M240 20L130 70M370 70L500 100 610 120 720 160 750 120M320 20V95L400 160 330 240 225 300M230 130L340 210 270 240M450 95L420 200 405 300 400 330M215 155L220 210M400 150L300 230M225 300V405M220 320L400 340 420 380M0 260L60 290M80 240L60 290M710 30L700 120M760 120L720 200 680 290M770 115L830 220 860 300 940 380 900 405M900 340L840 405M520 400L700 370 720 405M860 300L800 320"/>
</g>
<path d="M0 130L100 180 250 210 420 200 600 90" fill="none" stroke="#c9cacc" stroke-width="2"/>
<g fill="none" stroke="#f6d77c" stroke-width="9" stroke-linejoin="round">
<path d="M350 20L370 60 300 95 240 120 230 170 270 220 255 265 190 300 110 405M625 20L620 90 560 190 490 290 400 405"/>
</g>
</g>
</svg>
<g fill="#fff" stroke="#444" stroke-width="1.200">
<rect x="1050" y="928" width="18" height="16" rx="5"/><rect x="1215.500" y="940.500" width="20" height="17" rx="5"/><rect x="1346" y="947" width="19" height="16" rx="5"/><rect x="1308" y="1031" width="24" height="14" rx="5"/><path d="M798 911v2q0 5 5 5h10q5 0 5-5v-2z"/>
</g>
<g font-size="10.500" fill="#333" text-anchor="middle"><text x="1059" y="940">16</text><text x="1225.500" y="953">16</text><text x="1355.500" y="959">1A</text><text x="1320" y="1040">145</text></g>
<text x="843" y="922" font-size="11" fill="#555" textLength="25" lengthAdjust="spacing">{ 3 }</text>
<text class="mc" x="711" y="983" textLength="57" lengthAdjust="spacingAndGlyphs">Belmont</text>
<text class="mc" x="977" y="1023" style="font-size:18px" textLength="86" lengthAdjust="spacingAndGlyphs">Somerville</text>
<text class="mc" x="1231" y="1002" style="font-size:16px" textLength="56" lengthAdjust="spacingAndGlyphs">Chelsea</text>
<text class="mc" x="1160" y="921" textLength="48" lengthAdjust="spacingAndGlyphs">Everett</text>
<text class="mc" x="1310" y="921" textLength="48" lengthAdjust="spacingAndGlyphs">Revere</text>
<text class="ml" x="891" y="976" textLength="95">DAVIS SQUARE</text>
<text class="ml" x="1052" y="989" textLength="70">ASSEMBLY</text>
<text class="ml" x="1060" y="1001" textLength="53">SQUARE</text>
<text class="ml" x="1384" y="980" textLength="81">BEACHMONT</text>
<text class="ml" x="1309" y="1011" textLength="101">HARBOR VIEW /</text>
<text class="ml" x="1305" y="1023" textLength="109">ORIENT HEIGHTS</text>
<text class="ml" x="686" y="1021" textLength="68">WAVERLEY</text>
<text x="1510" y="933" font-size="13" fill="#5f80b4" transform="rotate(22 1510 933)" textLength="78">Broad Sound</text>
<rect x="699" y="923" width="85" height="50" rx="24" fill="#fff"/><rect x="785" y="923" width="121" height="50" rx="24" fill="#fff"/>
<text x="720" y="957" font-size="22" fill="#000" stroke="#000" stroke-width=".4" textLength="43" lengthAdjust="spacingAndGlyphs">Map</text>
<text x="805" y="957" font-size="22" fill="#444" textLength="80" lengthAdjust="spacingAndGlyphs">Satellite</text>
</svg>
</body></html>
